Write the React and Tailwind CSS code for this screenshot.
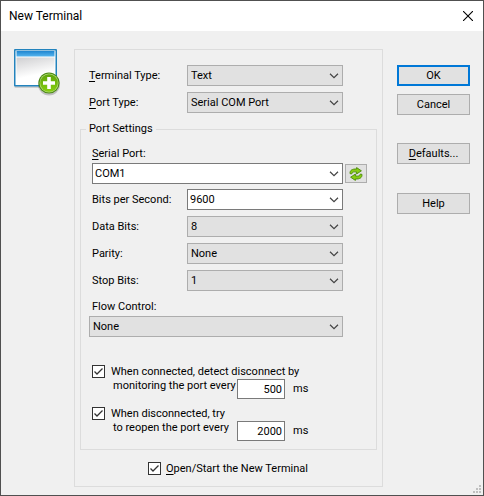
import React from 'react';

function Chevron() {
  return (
    <svg
      className="pointer-events-none absolute top-1/2 right-1 -translate-y-1/2"
      width="10"
      height="7"
      viewBox="0 0 10 7"
      fill="none"
      aria-hidden="true"
    >
      <path d="M1 1.3 L5 5.2 L9 1.3" stroke="#444" strokeWidth="1.2" />
    </svg>
  );
}

function Dropdown({ id, value, options = [], editable = false }) {
  const look = editable
    ? 'border-[#7a7a7a] bg-white pl-0.5'
    : 'border-[#adadad] bg-[#e1e1e1] pl-[3px]';
  return (
    <div className="relative min-w-0 flex-1">
      <select
        id={id}
        defaultValue={value}
        className={`block h-[21px] w-full appearance-none rounded-none border pr-5 text-[11px] leading-[16px] text-black outline-none ${look}`}
      >
        {[value, ...options].map((option) => (
          <option key={option}>{option}</option>
        ))}
      </select>
      <Chevron />
    </div>
  );
}

function CheckBox({ id }) {
  return (
    <span className="relative block size-[13px] shrink-0">
      <input
        id={id}
        type="checkbox"
        defaultChecked
        className="peer block size-[13px] appearance-none rounded-none border border-[#333] bg-white"
      />
      <svg
        className="pointer-events-none absolute inset-0 hidden peer-checked:block"
        width="13"
        height="13"
        viewBox="0 0 13 13"
        fill="none"
        aria-hidden="true"
      >
        <path d="M2.5 6.5 L5 9 L10.5 3.5" stroke="#333" strokeWidth="1.3" />
      </svg>
    </span>
  );
}

function PortRow({ id, label, value, options, editable }) {
  return (
    <div className="flex items-center pr-6">
      <label htmlFor={id} className="w-[95px] shrink-0">
        {label}
      </label>
      <Dropdown id={id} value={value} options={options} editable={editable} />
    </div>
  );
}

function TimedOption({ id, first, second, value }) {
  return (
    <div className="flex items-start gap-1.5">
      <CheckBox id={id} />
      <div>
        <label htmlFor={id} className="block h-[14px] leading-[13px] whitespace-nowrap">
          {first}
        </label>
        <div className="flex items-start">
          <label htmlFor={`${id}-time`} className="w-[126px] shrink-0 pl-0.5 leading-[13px] whitespace-nowrap">
            {second}
          </label>
          <input
            id={`${id}-time`}
            type="text"
            defaultValue={value}
            className="h-5 w-12 rounded-none border border-[#7a7a7a] bg-white pr-0.5 text-right text-[11px] text-black outline-none"
          />
          <span className="pl-2 leading-[20px]">ms</span>
        </div>
      </div>
    </div>
  );
}

function PushButton({ children, isDefault = false }) {
  const edge = isDefault ? 'border-2 border-[#0078d7]' : 'border border-[#adadad]';
  return (
    <button
      type="button"
      className={`flex h-[21px] w-full items-center justify-center bg-[#e1e1e1] text-[11px] text-black ${edge}`}
    >
      {children}
    </button>
  );
}

function TerminalIcon() {
  return (
    <svg width="48" height="50" viewBox="0 0 48 50" aria-hidden="true">
      <defs>
        <linearGradient id="bar" x1="0" y1="0" x2="0" y2="1">
          <stop offset="0" stopColor="#1f86d0" />
          <stop offset="1" stopColor="#55b4ee" />
        </linearGradient>
        <linearGradient id="pane" x1="0" y1="0" x2="0.3" y2="1">
          <stop offset="0" stopColor="#cfcfd1" />
          <stop offset="0.75" stopColor="#ffffff" />
        </linearGradient>
        <linearGradient id="disc" x1="0" y1="0" x2="0" y2="1">
          <stop offset="0" stopColor="#5fa30c" />
          <stop offset="1" stopColor="#86cf10" />
        </linearGradient>
      </defs>
      <rect x="0.5" y="1" width="42.5" height="38" rx="1" fill="#000" opacity="0.14" />
      <rect x="0" y="0" width="43" height="37.5" rx="1" fill="#2383bd" />
      <rect x="1.5" y="1.5" width="40" height="34.5" fill="#fff" />
      <rect x="2.5" y="2" width="38" height="5.5" fill="url(#bar)" />
      <rect x="2.5" y="8.5" width="38" height="26.5" fill="url(#pane)" />
      <ellipse cx="35" cy="35.5" rx="11" ry="11" fill="#000" opacity="0.2" />
      <circle cx="35" cy="34" r="10.6" fill="#4c8a14" />
      <circle cx="35" cy="34" r="9.5" fill="#b5dc7c" />
      <circle cx="35" cy="34" r="8.8" fill="url(#disc)" />
      <path d="M35 28 V40 M29 34 H41" stroke="#fff" strokeWidth="3.6" />
    </svg>
  );
}

function RefreshIcon() {
  return (
    <svg width="14" height="14" viewBox="0 0 14 14" aria-hidden="true">
      <g fill="#86cc12" stroke="#4c8a08" strokeWidth="0.9" strokeLinejoin="round">
        <path d="M1 6.6 C0.8 3.2 3.2 1.8 7.6 2 V0.6 L12.4 3.8 L7.6 7 V5 C4.8 4.6 3.2 5 2.6 7 Z" />
        <path d="M13 7.4 C13.2 10.8 10.8 12.2 6.4 12 V13.4 L1.6 10.2 L6.4 7 V9 C9.2 9.4 10.8 9 11.4 7 Z" />
      </g>
    </svg>
  );
}

export default function App() {
  return (
    <main className="flex min-h-screen flex-col border border-[#505050] bg-[#f0f0f0] font-['Roboto','Liberation_Sans',sans-serif] text-[11px] leading-[16px] text-black">
      <header className="flex h-[30px] items-center justify-between bg-white pr-2.5 pl-2">
        <h1 className="text-[12px]">New Terminal</h1>
        <button type="button" aria-label="Close">
          <svg width="10" height="10" viewBox="0 0 10 10" aria-hidden="true">
            <path d="M0 0 L10 10 M10 0 L0 10" stroke="#000" strokeWidth="1.1" />
          </svg>
        </button>
      </header>

      <div className="relative flex flex-1 items-start pt-[18px] pr-[13px] pb-2">
        <div className="w-[73px] shrink-0 pl-[13px]">
          <TerminalIcon />
        </div>

        <form className="min-w-0 flex-1 border border-[#dcdcdc] px-[5px] pt-[15px] pb-[11px]">
          <div className="flex flex-col gap-1.5 pr-[34px] pl-[9px]">
            <div className="flex items-center">
              <label htmlFor="terminal-type" className="w-[98px] shrink-0">
                <u className="underline-offset-2">T</u>erminal Type:
              </label>
              <Dropdown id="terminal-type" value="Text" options={['Hex', 'Binary']} />
            </div>
            <div className="flex items-center">
              <label htmlFor="port-type" className="w-[98px] shrink-0">
                <u className="underline-offset-2">P</u>ort Type:
              </label>
              <Dropdown id="port-type" value="Serial COM Port" options={['TCP/IP Socket']} />
            </div>
          </div>

          <fieldset className="mt-2 min-w-0 border border-[#dcdcdc] pr-[9px] pb-2 pl-[11px]">
            <legend className="-ml-1.5 px-[3px]">Port Settings</legend>

            <label htmlFor="serial-port" className="mt-[9px] block h-[17px]">
              <u className="underline-offset-2">S</u>erial Port:
            </label>
            <div className="flex items-center gap-0.5">
              <Dropdown id="serial-port" value="COM1" options={['COM2', 'COM3']} editable />
              <button
                type="button"
                aria-label="Refresh ports"
                className="flex h-[19px] w-[22px] items-center justify-center border border-[#adadad] bg-[#e1e1e1]"
              >
                <RefreshIcon />
              </button>
            </div>

            <div className="mt-[5px] flex flex-col gap-1.5">
              <PortRow id="bits" label="Bits per Second:" value="9600" options={['19200', '115200']} editable />
              <PortRow id="data" label="Data Bits:" value="8" options={['7']} />
              <PortRow id="parity" label="Parity:" value="None" options={['Even', 'Odd']} />
              <PortRow id="stop" label="Stop Bits:" value="1" options={['2']} />
            </div>

            <label htmlFor="flow" className="mt-2 block h-[17px]">
              Flow Control:
            </label>
            <div className="-ml-[3px] flex pr-6">
              <Dropdown id="flow" value="None" options={['Hardware', 'Software']} />
            </div>

            <div className="mt-7 flex flex-col gap-2">
              <TimedOption
                id="disconnect"
                first="When connected, detect disconnect by"
                second="monitoring the port every"
                value="500"
              />
              <TimedOption
                id="reopen"
                first="When disconnected, try"
                second="to reopen the port every"
                value="2000"
              />
            </div>
          </fieldset>

          <div className="mt-3 flex items-center gap-[5px] pl-[68px]">
            <CheckBox id="open-now" />
            <label htmlFor="open-now" className="leading-[13px]">
              <u className="underline-offset-2">O</u>pen/Start the New Terminal
            </label>
          </div>
        </form>

        <div className="ml-3.5 flex w-[73px] shrink-0 flex-col pt-4">
          <PushButton isDefault>OK</PushButton>
          <div className="mt-2">
            <PushButton>Cancel</PushButton>
          </div>
          <div className="mt-7">
            <PushButton>
              <span>
                <u className="underline-offset-2">D</u>efaults...
              </span>
            </PushButton>
          </div>
          <div className="mt-[29px]">
            <PushButton>Help</PushButton>
          </div>
        </div>

        <svg className="absolute right-0.5 bottom-0.5" width="8" height="8" viewBox="0 0 8 8" fill="#bfbfbf" aria-hidden="true">
          <rect x="6" y="0" width="2" height="2" />
          <rect x="3" y="3" width="2" height="2" />
          <rect x="6" y="3" width="2" height="2" />
          <rect x="0" y="6" width="2" height="2" />
          <rect x="3" y="6" width="2" height="2" />
          <rect x="6" y="6" width="2" height="2" />
        </svg>
      </div>
    </main>
  );
}
